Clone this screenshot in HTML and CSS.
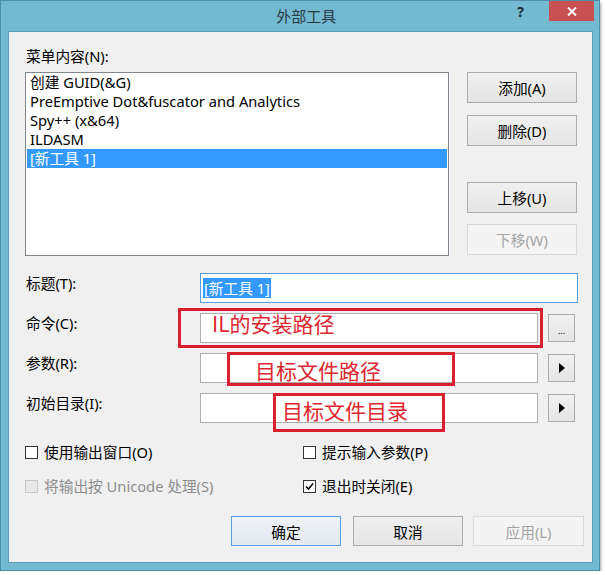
FILE: index.html
```html
<!DOCTYPE html>
<html lang="zh-CN">
<head>
  <meta charset="UTF-8" />
  <title>外部工具</title>
  <link rel="stylesheet" href="styles.css">
</head>
<body>
  <div class="window">
    <div class="titlebar">
      <span class="title">外部工具</span>
      <span class="help">?</span>
      <span class="close">
        <svg width="10" height="9" viewBox="0 0 10 9"><path d="M1 0.5 L9 8.5 M9 0.5 L1 8.5" stroke="#fff" stroke-width="2"/></svg>
      </span>
    </div>

    <div class="client">
      <div class="menu-label">菜单内容(N):</div>

      <div class="menu-row">
        <ul class="tool-list">
          <li>创建 GUID(&amp;G)</li>
          <li>PreEmptive Dot&amp;fuscator and Analytics</li>
          <li>Spy++ (x&amp;64)</li>
          <li>ILDASM</li>
          <li class="selected">[新工具 1]</li>
        </ul>
        <div class="side-buttons">
          <button class="btn">添加(A)</button>
          <button class="btn btn-del">删除(D)</button>
          <button class="btn btn-up">上移(U)</button>
          <button class="btn btn-down" disabled>下移(W)</button>
        </div>
      </div>

      <!-- Champs -->
      <div class="fields">
        <div class="field">
          <label>标题(T):</label>
          <div class="input input-wide focused"><span class="sel">[新工具 1]</span></div>
        </div>
        <div class="field">
          <label>命令(C):</label>
          <div class="input"></div>
          <button class="btn btn-small"><span class="dots">...</span></button>
        </div>
        <div class="field">
          <label>参数(R):</label>
          <div class="input"></div>
          <button class="btn btn-small">
            <svg width="6" height="10" viewBox="0 0 6 10"><path d="M0 0 L6 5 L0 10 Z" fill="#000"/></svg>
          </button>
        </div>
        <div class="field">
          <label>初始目录(I):</label>
          <div class="input"></div>
          <button class="btn btn-small">
            <svg width="6" height="10" viewBox="0 0 6 10"><path d="M0 0 L6 5 L0 10 Z" fill="#000"/></svg>
          </button>
        </div>
      </div>

      <div class="checks">
        <div class="check"><span class="box"></span>使用输出窗口(O)</div>
        <div class="check"><span class="box"></span>提示输入参数(P)</div>
        <div class="check disabled"><span class="box"></span>将输出按 Unicode 处理(S)</div>
        <div class="check">
          <span class="box">
            <svg width="9" height="9" viewBox="0 0 9 9"><path d="M1 4.5 L3.5 7 L8 1.5" stroke="#000" stroke-width="1.6" fill="none"/></svg>
          </span>退出时关闭(E)
        </div>
      </div>

      <div class="footer">
        <button class="btn btn-default">确定</button>
        <button class="btn btn-cancel">取消</button>
        <button class="btn btn-apply" disabled>应用(L)</button>
      </div>

      <!-- annotations rouges -->
      <div class="note note-cmd">IL的安装路径</div>
      <div class="note note-args">目标文件路径</div>
      <div class="note note-dir">目标文件目录</div>
    </div>
  </div>
</body>
</html>
```

FILE: styles.css
```css
* { box-sizing: border-box; }
body {
  margin: 0; background: #fff;
  font-family: 'Noto Sans', 'Noto Sans CJK SC', sans-serif;
  font-size: 14.7px; color: #000;
}
.window {
  width: 600px; height: 571px;
  background: #73b9d0; border: 1px solid #4f8ea6;
  padding: 0 6px 7px 7px;
  display: flex; flex-direction: column;
  box-shadow: 1px 3px 3px rgba(0,0,0,0.35);
}
.titlebar {
  height: 30px; display: flex; align-items: flex-start;
  padding-left: 87px;
}
.title {
  flex: 1; text-align: center; font-size: 15px; line-height: 30px;
  color: #2a3a44;
}
.help {
  font-weight: 700; font-size: 14px; line-height: 22px; color: #1c2a33;
  margin-right: 25px;
}
.close {
  width: 45px; height: 20px; background: #c75050;
  display: flex; justify-content: center; align-items: center;
  margin-right: -1px;
}
.client {
  flex: 1; position: relative;
  background: #f0f0f0; border: 1px solid #5b9db5;
  padding: 14px 8px 0 16px;
}
.menu-label { line-height: 20px; padding-left: 1px; }
.menu-row { display: flex; margin-top: 6px; }
.tool-list {
  list-style: none; margin: 0; padding: 0;
  width: 424px; height: 184px;
  background: #fff; border: 1px solid #828790;
}
.tool-list li {
  height: 19px; line-height: 19px; padding-left: 3px; margin: 0 1px;
  white-space: nowrap;
}
.tool-list li.selected { background: #3399ff; color: #fff; }
.side-buttons {
  display: flex; flex-direction: column; margin-left: 18px; width: 110px;
}
button { font-family: inherit; font-size: 14.7px; color: #000; }
.btn {
  height: 31px; padding: 0;
  background: linear-gradient(#f0f0f0, #e5e5e5);
  border: 1px solid #acacac; border-radius: 0;
}
.btn:disabled {
  background: #f4f4f4; border-color: #dadada; color: #a3a3a3;
}
.btn-del { margin-top: 12px; }
.btn-up { margin-top: 36px; }
.btn-down { margin-top: 11px; }

.fields {
  display: flex; flex-direction: column; gap: 10px; margin-top: 17px;
}
.field { display: flex; align-items: center; height: 30px; }
.field label {
  width: 175px; padding-left: 1px; line-height: 20px; align-self: flex-start;
}
.input {
  width: 338px; height: 30px; background: #fff; border: 1px solid #abadb3;
  padding: 4px 2px;
}
.input-wide { width: 378px; }
.input.focused { border-color: #569de5; }
.sel {
  background: #3399ff; color: #fff; line-height: 20px; display: inline-block;
  padding: 0 1px;
}
.btn-small {
  width: 27px; height: 28px; margin-left: 10px;
  display: flex; justify-content: center; align-items: center;
}
.dots { font-size: 9px; line-height: 9px; margin-top: 4px; }

.checks {
  display: grid; grid-template-columns: 278px 1fr; row-gap: 14px;
  margin-top: 19px;
}
.check { display: flex; align-items: center; line-height: 20px; }
.box {
  width: 13px; height: 13px; border: 1px solid #333; background: #fff;
  margin-right: 6px; display: flex; justify-content: center; align-items: center;
}
.check.disabled { color: #8d8d8d; }
.check.disabled .box { border-color: #c8c8c8; background: #e8e8e8; }

.footer {
  display: flex; justify-content: flex-end; margin-top: 20px;
}
.footer .btn { width: 110px; height: 30px; }
.btn-default { border-color: #5d9ce0; background: linear-gradient(#eef2f7, #e3e9f0); }
.btn-cancel { margin-left: 12px; }
.btn-apply { margin-left: 10px; width: 111px !important; }

.note {
  position: absolute; border: 3px solid #dc1f2e;
  color: #e0262f; font-size: 21px; line-height: 24px;
  font-family: 'Noto Sans CJK SC', sans-serif; white-space: nowrap;
}
.note-cmd { left: 169px; top: 276px; width: 365px; height: 40px; padding-left: 31px; }
.note-args { left: 218px; top: 320px; width: 228px; height: 34px; padding: 3px 0 0 25px; }
.note-dir { left: 264px; top: 361px; width: 172px; height: 39px; padding: 2px 0 0 6px; }
```
